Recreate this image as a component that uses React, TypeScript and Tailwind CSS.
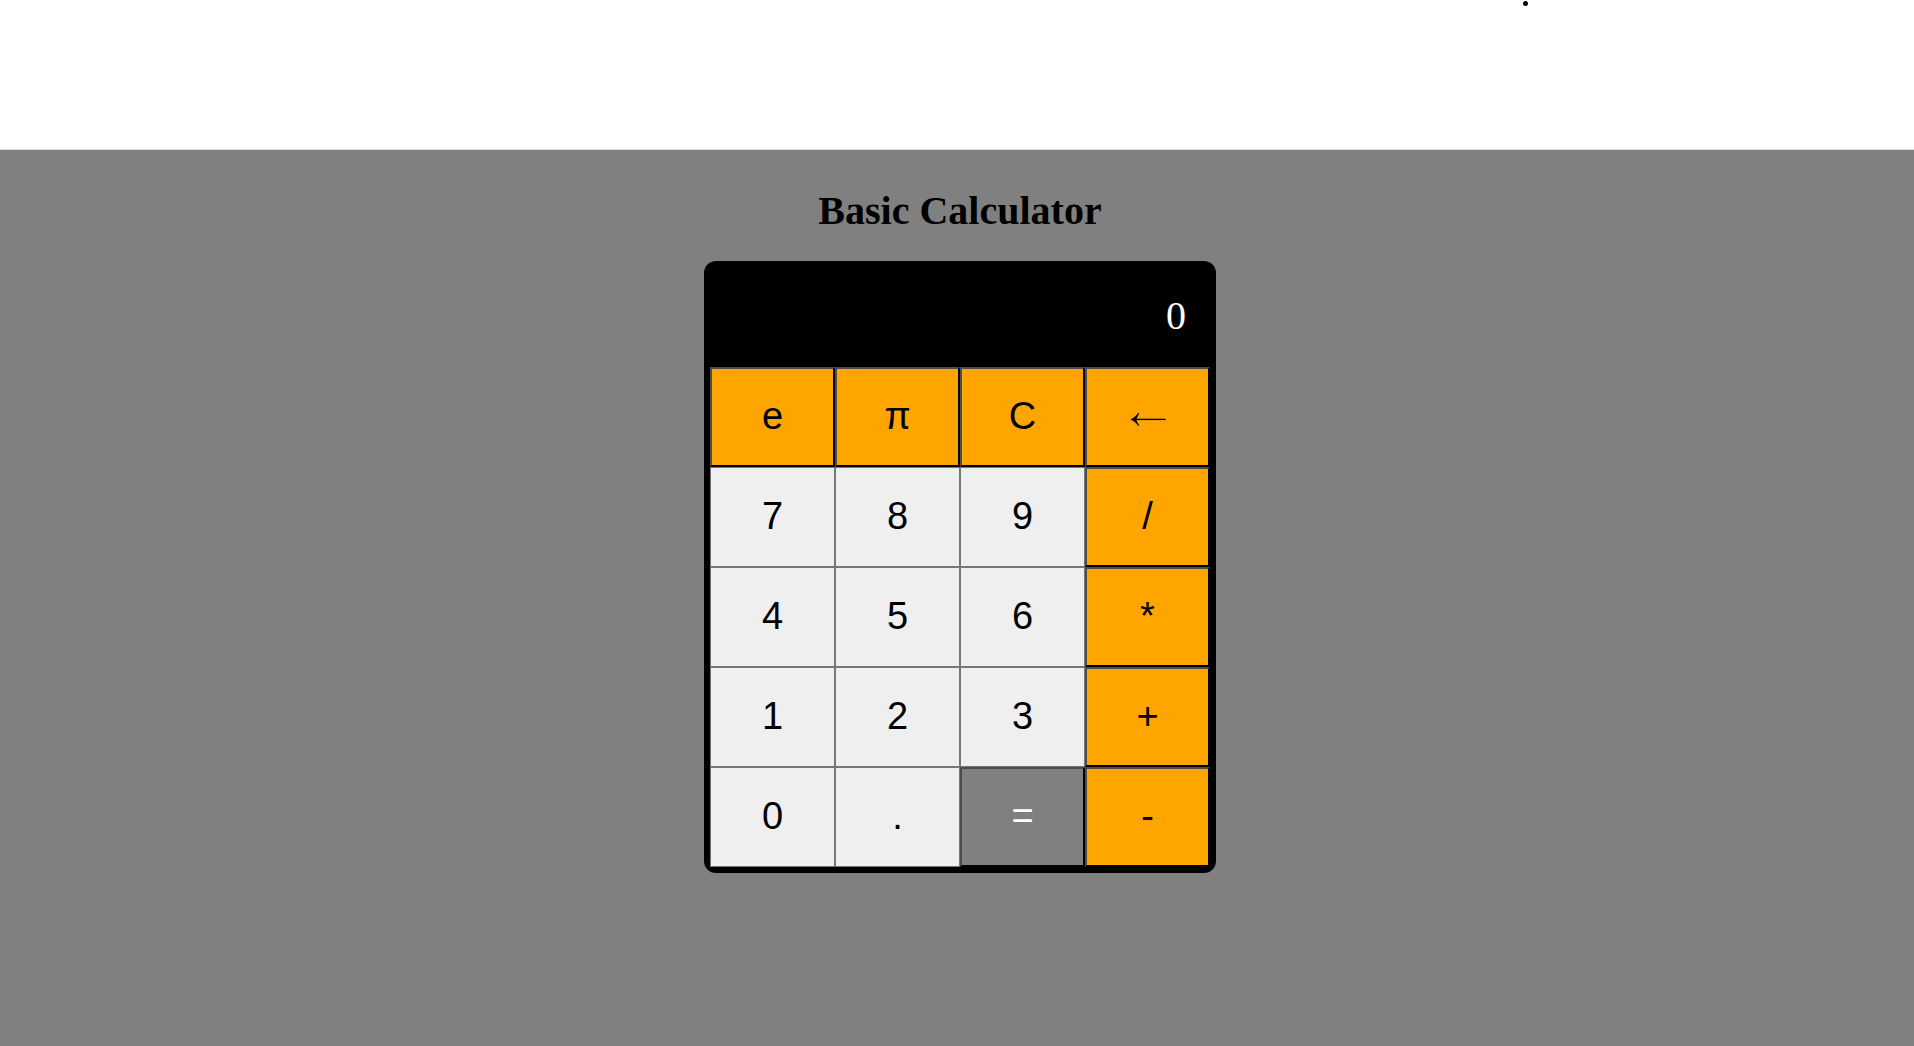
import { useState } from "react";

type Kind = "digit" | "operator" | "equals";

const keys: { label: string; kind: Kind; name?: string }[] = [
  { label: "e", kind: "operator" },
  { label: "π", kind: "operator" },
  { label: "C", kind: "operator", name: "Clear" },
  { label: "←", kind: "operator", name: "Backspace" },
  { label: "7", kind: "digit" },
  { label: "8", kind: "digit" },
  { label: "9", kind: "digit" },
  { label: "/", kind: "operator" },
  { label: "4", kind: "digit" },
  { label: "5", kind: "digit" },
  { label: "6", kind: "digit" },
  { label: "*", kind: "operator" },
  { label: "1", kind: "digit" },
  { label: "2", kind: "digit" },
  { label: "3", kind: "digit" },
  { label: "+", kind: "operator" },
  { label: "0", kind: "digit" },
  { label: ".", kind: "digit" },
  { label: "=", kind: "equals" },
  { label: "-", kind: "operator" },
];

const kindClass: Record<Kind, string> = {
  digit: "border border-[#767676] bg-[#efefef] text-black",
  operator:
    "border-2 border-t-[#4c4c4c] border-r-black border-b-black border-l-[#4c4c4c] bg-[#ffa500] text-black",
  equals:
    "border-2 border-t-[#4c4c4c] border-r-black border-b-black border-l-[#4c4c4c] bg-[#808080] text-white",
};

function apply(a: number, op: string, b: number) {
  if (op === "+") return a + b;
  if (op === "-") return a - b;
  if (op === "*") return a * b;
  return a / b;
}

function BackArrow() {
  return (
    <svg viewBox="0 0 36 20" className="mx-auto h-5 w-9" aria-hidden="true">
      <path d="M5 13.4H35.5" stroke="black" strokeWidth="1.4" fill="none" />
      <path
        d="M0.5 13.4C4 12 6.6 9.6 8.2 6.8L9.2 7.4C8 9.6 6.8 11.4 6.6 13.4C6.8 15.4 8 17.2 9.2 19.4L8.2 20C6.6 17.2 4 14.8 0.5 13.4Z"
        fill="black"
      />
    </svg>
  );
}

export default function App() {
  const [display, setDisplay] = useState("0");
  const [pending, setPending] = useState<{ value: number; op: string } | null>(null);
  const [fresh, setFresh] = useState(true);

  function press(label: string) {
    if (label === "C") {
      setDisplay("0");
      setPending(null);
      setFresh(true);
    } else if (label === "←") {
      setDisplay(display.length > 1 ? display.slice(0, -1) : "0");
    } else if (label === "e" || label === "π") {
      setDisplay(String(label === "e" ? Math.E : Math.PI).slice(0, 10));
      setFresh(true);
    } else if (label === "=" || "+-*/".includes(label)) {
      const current = Number(display);
      const value = pending ? apply(pending.value, pending.op, current) : current;
      setDisplay(String(value));
      setPending(label === "=" ? null : { value, op: label });
      setFresh(true);
    } else if (label === ".") {
      if (fresh) setDisplay("0.");
      else if (!display.includes(".")) setDisplay(display + ".");
      setFresh(false);
    } else {
      setDisplay(fresh || display === "0" ? label : display + label);
      setFresh(false);
    }
  }

  return (
    <div className="flex min-h-screen flex-col bg-[#808080]">
      <header className="flex h-[150px] justify-end border-b border-[#dcdcdc] bg-white pt-px pr-[386px]">
        <span className="size-[5px] rounded-full bg-black" />
      </header>
      <main className="flex grow flex-col items-center pt-[37px] pb-9 pl-1.5">
        <h1 className="mb-[26px] font-['Liberation_Serif',serif] text-[40px] leading-[48px] font-bold text-black">
          Basic Calculator
        </h1>
        <section aria-label="Calculator" className="w-full max-w-[512px] rounded-xl bg-black p-1.5">
          <output className="flex h-[100px] items-center justify-end overflow-hidden px-6 pb-0.5 font-['Liberation_Serif',serif] text-[40px] text-white">
            {display}
          </output>
          <div className="grid grid-cols-4">
            {keys.map((key) => (
              <button
                key={key.label}
                type="button"
                aria-label={key.name}
                onClick={() => press(key.label)}
                className={`h-[100px] pb-0.5 font-['Liberation_Sans',sans-serif] text-[38px] leading-[44px] ${kindClass[key.kind]}`}
              >
                {key.label === "←" ? <BackArrow /> : key.label}
              </button>
            ))}
          </div>
        </section>
      </main>
    </div>
  );
}
